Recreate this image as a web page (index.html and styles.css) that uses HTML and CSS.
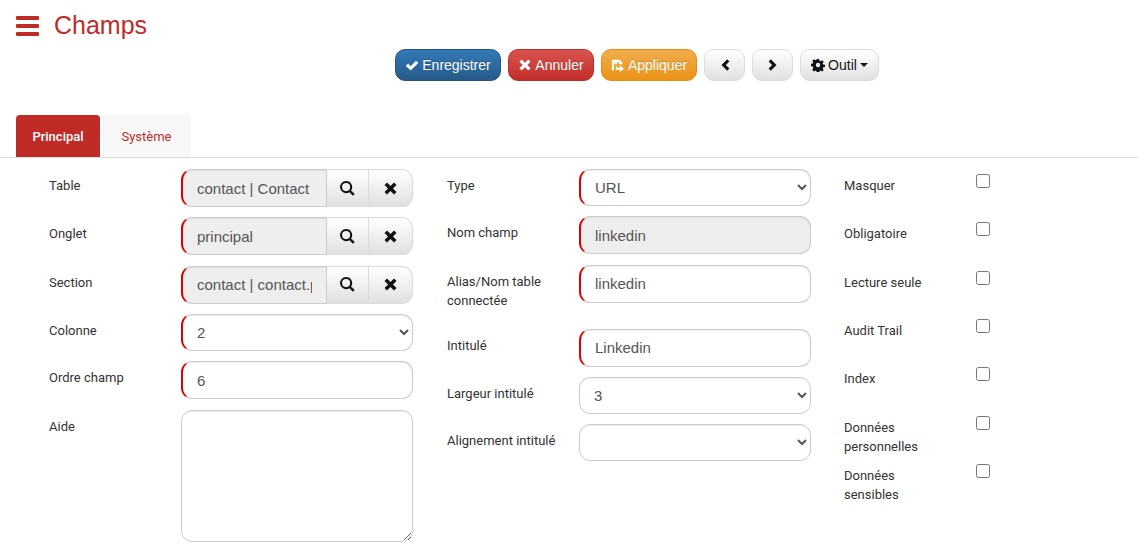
FILE: index.html
```html
<!DOCTYPE html>
<html lang="fr">
<head>
  <meta charset="UTF-8">
  <title>Champs</title>
  <link rel="stylesheet" href="styles.css">
</head>
<body>

<svg width="0" height="0" class="defs">
  <symbol id="i-check" viewBox="0 0 16 16"><path d="M1 9l2.6-2.6 2.9 2.9L12.6 3 15.2 5.6 6.5 14.4z"/></symbol>
  <symbol id="i-x" viewBox="0 0 16 16"><path d="M4.2 1.6L8 5.4l3.8-3.8 2.6 2.6L10.6 8l3.8 3.8-2.6 2.6L8 10.6l-3.8 3.8-2.6-2.6L5.400 8 1.600 4.200z"/></symbol>
  <symbol id="i-apply" viewBox="0 0 16 16"><path d="M1 2h9l3 3v2H9V4.500H7V7H4V4.500H3.300V14H1zM5.500 9H7v2h3V8.500l5 3.700-5 3.800V13.500H5.500z"/></symbol>
  <symbol id="i-left" viewBox="0 0 16 16"><path d="M10.500 1.500l2.500 2.500-4 4 4 4-2.500 2.500L4 8z"/></symbol>
  <symbol id="i-right" viewBox="0 0 16 16"><path d="M5.500 1.500L3 4l4 4-4 4 2.500 2.500L12 8z"/></symbol>
  <symbol id="i-cog" viewBox="0 0 16 16"><path fill-rule="evenodd" d="M6.700 1h2.600l.4 2 1.300.6 1.700-1.100 1.800 1.800-1.100 1.700.6 1.300 2 .4v2.600l-2 .4-.6 1.300 1.100 1.700-1.800 1.800-1.700-1.100-1.300.6-.4 2H6.700l-.4-2-1.300-.6-1.700 1.100-1.800-1.800L2.600 11 2 9.700 0 9.300V6.700l2-.4L2.600 5 1.500 3.300l1.800-1.800L5 2.600l1.300-.6zM8 5.500a2.500 2.500 0 1 0 0 5 2.500 2.500 0 0 0 0-5z"/></symbol>
  <symbol id="i-search" viewBox="0 0 16 16"><path fill-rule="evenodd" d="M6.500 0a6.500 6.500 0 0 1 5.300 10.200l3.900 3.700-1.900 1.900-3.800-3.800A6.500 6.500 0 1 1 6.500 0zm0 2.200a4.300 4.300 0 1 0 0 8.600 4.300 4.300 0 0 0 0-8.600z"/></symbol>
</svg>

<header class="page-head">
  <button class="menu-btn" type="button" aria-label="Menu"><span></span><span></span><span></span></button>
  <h1>Champs</h1>
</header>

<div class="toolbar">
  <button class="btn btn-blue" type="button"><svg class="ico"><use href="#i-check"/></svg>Enregistrer</button>
  <button class="btn btn-red" type="button"><svg class="ico"><use href="#i-x"/></svg>Annuler</button>
  <button class="btn btn-orange" type="button"><svg class="ico"><use href="#i-apply"/></svg>Appliquer</button>
  <button class="btn btn-plain btn-nav" type="button" aria-label="Précédent"><svg class="ico"><use href="#i-left"/></svg></button>
  <button class="btn btn-plain btn-nav" type="button" aria-label="Suivant"><svg class="ico"><use href="#i-right"/></svg></button>
  <button class="btn btn-plain btn-tool" type="button"><svg class="ico"><use href="#i-cog"/></svg>Outil<span class="caret"></span></button>
</div>

<ul class="tabs">
  <li class="tab active">Principal</li>
  <li class="tab">Système</li>
</ul>

<form class="fields">
  <div class="col">
    <div class="row">
      <label>Table</label>
      <div class="group">
        <input class="ctl req" type="text" value="contact | Contact" readonly>
        <button class="add" type="button"><svg class="ico"><use href="#i-search"/></svg></button>
        <button class="add" type="button"><svg class="ico"><use href="#i-x"/></svg></button>
      </div>
    </div>
    <div class="row">
      <label>Onglet</label>
      <div class="group">
        <input class="ctl req" type="text" value="principal" readonly>
        <button class="add" type="button"><svg class="ico"><use href="#i-search"/></svg></button>
        <button class="add" type="button"><svg class="ico"><use href="#i-x"/></svg></button>
      </div>
    </div>
    <div class="row">
      <label>Section</label>
      <div class="group">
        <input class="ctl req" type="text" value="contact | contact.principal" readonly>
        <button class="add" type="button"><svg class="ico"><use href="#i-search"/></svg></button>
        <button class="add" type="button"><svg class="ico"><use href="#i-x"/></svg></button>
      </div>
    </div>
    <div class="row">
      <label>Colonne</label>
      <select class="ctl req sel-wide"><option>2</option></select>
    </div>
    <div class="row">
      <label>Ordre champ</label>
      <input class="ctl req" type="text" value="6">
    </div>
    <div class="row">
      <label>Aide</label>
      <textarea class="ctl area"></textarea>
    </div>
  </div>

  <div class="col">
    <div class="row">
      <label>Type</label>
      <select class="ctl req sel-wide"><option>URL</option></select>
    </div>
    <div class="row">
      <label>Nom champ</label>
      <input class="ctl req" type="text" value="linkedin" readonly>
    </div>
    <div class="row row-tall">
      <label>Alias/Nom table connectée</label>
      <input class="ctl req editable" type="text" value="linkedin">
    </div>
    <div class="row">
      <label>Intitulé</label>
      <input class="ctl req editable" type="text" value="Linkedin">
    </div>
    <div class="row">
      <label>Largeur intitulé</label>
      <select class="ctl"><option>3</option></select>
    </div>
    <div class="row">
      <label>Alignement intitulé</label>
      <select class="ctl"><option></option></select>
    </div>
  </div>

  <div class="col col-checks">
    <div class="row"><label>Masquer</label><input type="checkbox"></div>
    <div class="row"><label>Obligatoire</label><input type="checkbox"></div>
    <div class="row"><label>Lecture seule</label><input type="checkbox"></div>
    <div class="row"><label>Audit Trail</label><input type="checkbox"></div>
    <div class="row"><label>Index</label><input type="checkbox"></div>
    <div class="row"><label>Données personnelles</label><input type="checkbox"></div>
    <div class="row"><label>Données sensibles</label><input type="checkbox"></div>
  </div>
</form>

</body>
</html>
```

FILE: styles.css
```css
* {
  box-sizing: border-box;
}

html, body {
  height: 100%;
  overflow: hidden;
}

body {
  margin: 0;
  background: #fff;
  color: #333;
  font-family: "Liberation Sans", Arial, sans-serif;
  font-size: 14px;
}

.defs {
  position: absolute;
}

.ico {
  width: 14px;
  height: 14px;
  fill: currentColor;
  flex: none;
}

.page-head {
  display: flex;
  align-items: center;
  height: 49px;
  padding: 5px 0 0 16px;
}

.menu-btn {
  display: flex;
  flex-direction: column;
  justify-content: space-between;
  width: 23px;
  height: 20px;
  margin: -3px 15px 0 0;
  padding: 0;
  border: none;
  background: none;
}

.menu-btn span {
  display: block;
  height: 4px;
  background: #c12b27;
  border-radius: 1px;
}

h1 {
  margin: -3px 0 0;
  color: #c12b27;
  font-size: 25px;
  font-weight: 400;
}

.toolbar {
  display: flex;
  gap: 7px;
  height: 32px;
  margin-left: 395px;
}

.btn {
  display: flex;
  align-items: center;
  justify-content: center;
  height: 32px;
  padding: 0;
  border: 1px solid transparent;
  border-radius: 10px;
  color: #fff;
  font-family: "Liberation Sans", Arial, sans-serif;
  font-size: 14px;
  gap: 3px;
  text-shadow: 0 -1px 0 rgba(0,0,0,0.2);
}

.btn-blue {
  width: 106px;
  background: linear-gradient(#337ab7, #265a88);
  border-color: #245580;
}

.btn-red {
  width: 86px;
  background: linear-gradient(#d9534f, #c12e2a);
  border-color: #b92c28;
}

.btn-orange {
  width: 96px;
  background: linear-gradient(#f0ad4e, #eb9316);
  border-color: #e38d13;
}

.btn-plain {
  background: linear-gradient(#fff, #e0e0e0);
  border-color: #dbdbdb;
  color: #111;
  text-shadow: 0 1px 0 #fff;
}

.btn-nav {
  width: 41px;
}

.btn-tool {
  width: 79px;
}

.caret {
  width: 0;
  height: 0;
  margin-left: 0;
  border-top: 4px solid #111;
  border-left: 4px solid transparent;
  border-right: 4px solid transparent;
}

.tabs {
  display: flex;
  gap: 3px;
  height: 43px;
  margin: 34px 0 0;
  padding: 0 0 0 16px;
  list-style: none;
  border-bottom: 1px solid #ddd;
  font-family: Roboto, sans-serif;
  font-size: 13px;
}

.tab {
  display: flex;
  align-items: center;
  justify-content: center;
  width: 87px;
  height: 42px;
  background: #f8f8f8;
  border: 1px solid #f2f2f2;
  border-bottom: none;
  border-radius: 4px 4px 0 0;
  color: #c12b27;
}

.tab.active {
  width: 84px;
  background: #c12b27;
  border-color: #c12b27;
  color: #fff;
  font-weight: 500;
}

.fields {
  display: grid;
  grid-template-columns: 398px 397px 1fr;
  padding: 11px 0 0 49px;
}

.row {
  display: flex;
  align-items: flex-start;
  margin-bottom: 10.33px;
}

.row-tall {
  margin-bottom: 19px;
}

.row label {
  flex: none;
  width: 132px;
  padding: 7px 20px 0 0;
  font-family: Roboto, sans-serif;
  font-size: 13px;
  line-height: 19px;
  color: #333;
}

.ctl {
  width: 232px;
  height: 38px;
  padding: 6px 14px;
  background: #fff;
  border: 1px solid #ccc;
  border-radius: 11px;
  box-shadow: inset 0 1px 1px rgba(0,0,0,0.075);
  color: #555;
  font-family: "Liberation Sans", Arial, sans-serif;
  font-size: 15px;
  outline: none;
}

.ctl[readonly] {
  background: #eee;
}

.req {
  border-left: 2px solid #e00000;
}

.ctl.editable {
  height: 38px;
}

select.ctl {
  height: 37px;
  padding-left: 10px;
}

.area {
  display: block;
  height: 132px;
  resize: both;
}

.group {
  display: flex;
  width: 232px;
}

.group .ctl {
  width: 146px;
  border-radius: 11px 0 0 11px;
}

.add {
  display: flex;
  align-items: center;
  justify-content: center;
  width: 42px;
  height: 38px;
  padding: 0;
  background: linear-gradient(#fff, #e0e0e0);
  border: 1px solid #dbdbdb;
  border-left: none;
  color: #111;
}

.add:last-child {
  width: 44px;
  border-radius: 0 11px 11px 0;
}

.add .ico {
  width: 15px;
  height: 15px;
}

.col-checks .row {
  margin: 0;
  height: 48.33px;
}

.col-checks label {
  width: 132px;
  padding-right: 30px;
}

.col-checks input {
  width: 14px;
  height: 14px;
  margin: 5px 0 0;
  accent-color: #666;
}
```
